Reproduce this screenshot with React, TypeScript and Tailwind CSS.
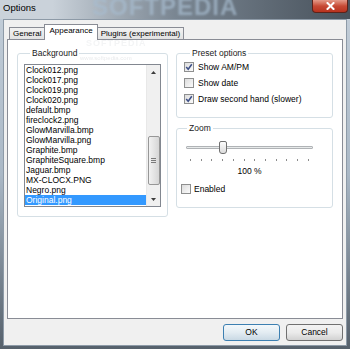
import React from "react";

const files = [
  "Clock012.png",
  "Clock017.png",
  "Clock019.png",
  "Clock020.png",
  "default.bmp",
  "fireclock2.png",
  "GlowMarvilla.bmp",
  "GlowMarvilla.png",
  "Graphite.bmp",
  "GraphiteSquare.bmp",
  "Jaguar.bmp",
  "MX-CLOCX.PNG",
  "Negro.png",
  "Original.png",
];

function CheckBox({ checked }: { checked?: boolean }) {
  return (
    <span className="flex h-[10px] w-[10px] shrink-0 items-center justify-center border border-[#8e8f8f] bg-linear-to-br from-[#dcdcdc] to-[#fbfbfb]">
      {checked && (
        <svg width="8" height="8" viewBox="0 0 8 8">
          <path d="M1.2 4 L3.2 6.3 L6.8 1.2" fill="none" stroke="#3d4f86" strokeWidth="1.5" />
        </svg>
      )}
    </span>
  );
}

function Group({ title, className, children }: { title: string; className?: string; children: React.ReactNode }) {
  return (
    <fieldset className={"rounded-[3px] border border-[#d5dfe5] " + (className || "")}>
      <legend className="ml-[6px] px-[2px] leading-[10px] text-[#1a1a1a]">{title}</legend>
      {children}
    </fieldset>
  );
}

function Tab({ label, active }: { label: string; active?: boolean }) {
  if (active) {
    return (
      <div className="relative z-10 -mx-[1px] flex h-[16px] items-start border border-b-0 border-[#898c95] bg-white px-[4px] pt-[1px] text-[8px] leading-[10px]">
        {label}
      </div>
    );
  }
  return (
    <div className="flex h-[13px] items-start border border-b-0 border-[#898c95] bg-linear-to-b from-[#f2f2f2] to-[#e0e0e0] px-[3px] pt-[1px] text-[8px] leading-[10px]">
      {label}
    </div>
  );
}

function Button({ label, focused }: { label: string; focused?: boolean }) {
  return (
    <button
      className={
        "flex h-[17px] w-[57px] items-center justify-center rounded-[3px] border leading-none " +
        (focused
          ? "border-[#3c7fb1] bg-linear-to-b from-[#f3f8fb] via-[#e3ecf2] to-[#c9d9e4]"
          : "border-[#707070] bg-linear-to-b from-[#f3f3f3] via-[#ebebeb] to-[#d2d2d2]")
      }
    >
      {label}
    </button>
  );
}

export default function App() {
  return (
    <div
      className="relative flex h-[349px] w-[350px] flex-col overflow-hidden bg-linear-to-b from-[#c3ced9] via-[#aab8c6] to-[#56616c] text-[8.5px] text-black"
      style={{ fontFamily: '"Liberation Sans", Arial, sans-serif' }}
    >
      {/* title bar */}
      <div className="relative flex h-[19px] shrink-0 items-start justify-between overflow-hidden bg-linear-to-r from-[#cad2da] from-15% via-[#7a8692] via-50% to-[#48525c]">
        <span className="absolute left-[92px] top-[-6px] text-[24px] font-bold leading-[26px] tracking-[1px] text-[#a7bccf] opacity-70 blur-[1px]">
          SOFTPEDIA
        </span>
        <span className="relative pl-[3px] pt-[2px] text-[9.5px] leading-[11px] text-black">Options</span>
        <div className="relative mr-[2px] flex h-[13px] w-[36px] items-center justify-center rounded-b-[4px] border border-t-0 border-[#5e2219] bg-linear-to-b from-[#e49a89] via-[#c74a35] to-[#b8321e]">
          <svg width="9" height="8" viewBox="0 0 9 8">
            <path d="M1.5 1 L7.5 7 M7.5 1 L1.5 7" stroke="white" strokeWidth="2" strokeLinecap="square" />
          </svg>
        </div>
      </div>

      {/* client */}
      <div className="relative mx-[3px] mb-[3px] flex flex-1 flex-col border border-[#8d9aa7] bg-[#f0f0f0]">
        {/* faint watermark */}
        <span className="pointer-events-none absolute left-[82px] top-[18px] z-20 text-[9px] font-bold leading-[10px] tracking-[1px] text-[#d0d4d8] opacity-25">
          SOFTPEDIA
        </span>
        <span className="pointer-events-none absolute left-[76px] top-[35px] z-20 text-[6px] leading-[7px] text-[#c8ccd0] opacity-40">
          www.softpedia.com
        </span>

        {/* tabs */}
        <div className="flex items-end pl-[5px] pt-[4px]">
          <Tab label="General" />
          <Tab label="Appearance" active />
          <Tab label="Plugins (experimental)" />
        </div>

        {/* tab page */}
        <div className="-mt-px mx-[3px] flex h-[280px] gap-[8px] border border-[#898c95] bg-white pl-[9px] pt-[8px]">
          <Group title="Background" className="w-[151px] self-start pb-[9px] pl-[6px]">
            <div className="mt-[6px] flex h-[143px] w-[137px] border border-[#828790] bg-white">
              <div className="flex flex-1 flex-col">
                {files.map((f) => (
                  <div
                    key={f}
                    className={
                      "h-[10px] pl-[1px] leading-[10px] " +
                      (f === "Original.png" ? "bg-[#3399ff] text-white" : "")
                    }
                  >
                    {f}
                  </div>
                ))}
              </div>
              <div className="flex w-[14px] flex-col items-center border-l border-[#e8e8e8] bg-[#f0f0f0]">
                <div className="flex h-[14px] items-center justify-center">
                  <svg width="5" height="3" viewBox="0 0 5 3">
                    <path d="M0 3 L2.5 0 L5 3 Z" fill="#3c3c3c" />
                  </svg>
                </div>
                <div className="mt-[57px] flex h-[49px] w-[12px] flex-col items-center justify-center gap-[1px] rounded-[2px] border border-[#979797] bg-linear-to-r from-[#f2f2f2] to-[#d6d6d6]">
                  <span className="h-px w-[5px] bg-[#7a7a7a]" />
                  <span className="h-px w-[5px] bg-[#7a7a7a]" />
                  <span className="h-px w-[5px] bg-[#7a7a7a]" />
                </div>
                <div className="mt-auto flex h-[14px] items-center justify-center">
                  <svg width="5" height="3" viewBox="0 0 5 3">
                    <path d="M0 0 L2.5 3 L5 0 Z" fill="#3c3c3c" />
                  </svg>
                </div>
              </div>
            </div>
          </Group>

          <div className="flex w-[157px] flex-col">
            <Group title="Preset options" className="pb-[10px] pl-[7px]">
              <div className="mt-[1px] flex flex-col">
                <label className="flex h-[16px] items-center gap-[4px]">
                  <CheckBox checked />
                  <span>Show AM/PM</span>
                </label>
                <label className="flex h-[16px] items-center gap-[4px]">
                  <CheckBox />
                  <span>Show date</span>
                </label>
                <label className="flex h-[16px] items-center gap-[4px]">
                  <CheckBox checked />
                  <span>Draw second hand (slower)</span>
                </label>
              </div>
            </Group>

            <Group title="Zoom" className="mt-[5px] pb-[12px] pl-[4px]">
              <div className="ml-[5px] w-[127px]">
                <div className="relative mt-[8px] flex h-[13px] items-center">
                  <div className="h-[3px] w-full rounded-[1px] border border-[#b0b3b6] bg-[#e7eaea]" />
                  <div className="absolute left-[33px] top-0 h-[13px] w-[8px] rounded-[2px] rounded-b-[3px] border border-[#707070] bg-linear-to-b from-[#fdfdfd] to-[#dcdcdc]" />
                </div>
                <div className="mx-[4px] mt-[5px] flex h-[2px] justify-between">
                  {Array.from({ length: 12 }).map((_, i) => (
                    <span key={i} className="h-[2px] w-px bg-[#8c8c8c]" />
                  ))}
                </div>
                <div className="mt-[5px] text-center leading-[10px]">100 %</div>
              </div>
              <label className="mt-[7px] flex h-[12px] items-center gap-[3px]">
                <CheckBox />
                <span>Enabled</span>
              </label>
            </Group>
          </div>
        </div>

        {/* buttons */}
        <div className="mt-[5px] flex justify-end gap-[6px] pr-[3px]">
          <Button label="OK" focused />
          <Button label="Cancel" />
        </div>
      </div>
    </div>
  );
}
